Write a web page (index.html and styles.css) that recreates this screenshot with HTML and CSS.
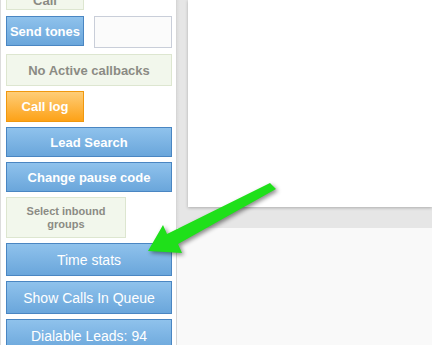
FILE: index.html
```html
<!DOCTYPE html>
<html lang="en">
<head>
  <meta charset="UTF-8">
  <meta name="viewport" content="width=device-width, initial-scale=1.0">
  <title>Agent Panel</title>
  <link rel="stylesheet" href="styles.css">
</head>
<body>
  <div class="page">
    <div class="sidebar">
      <div class="btn pale small-w call">Call</div>
      <div class="row">
        <div class="btn blue bold small-w">Send tones</div>
        <input class="tones" type="text">
      </div>
      <div class="btn pale">No Active callbacks</div>
      <div class="btn orange bold small-w">Call log</div>
      <div class="btn blue bold">Lead Search</div>
      <div class="btn blue bold">Change pause code</div>
      <div class="btn pale two-line">Select inbound<br>groups</div>
      <div class="btn blue tall">Time stats</div>
      <div class="btn blue tall">Show Calls In Queue</div>
      <div class="btn blue tall">Dialable Leads: 94</div>
    </div>
    <div class="main">
      <div class="top">
        <div class="card"></div>
      </div>
      <div class="bottom"></div>
    </div>
  </div>
  <svg class="arrow" width="432" height="345" viewBox="0 0 432 345">
    <polygon points="270,183 276,189 178,244 182,253 148,251 163,225 167,234" fill="#1fe01a"/>
  </svg>
</body>
</html>
```

FILE: styles.css
```css
body{margin:0;font-family:"Liberation Sans",Arial,sans-serif;background:#fff;overflow:hidden;}
.page{display:flex;height:345px;}
.sidebar{width:166px;padding:0 4px 0 5px;border-left:1px solid #dcdcdc;border-right:1px solid #d6d6d6;display:flex;flex-direction:column;gap:5px;margin-top:-20px;background:#fff;}
.row{display:flex;justify-content:space-between;align-items:flex-start;margin-top:1px;margin-bottom:1px;}
.btn{box-sizing:border-box;height:30px;display:flex;align-items:center;justify-content:center;text-align:center;font-size:13px;flex-shrink:0;}
.bold{font-weight:bold;}
.small-w{width:78px;}
.pale.call{align-items:flex-end;padding-bottom:1px;line-height:14px;}
.blue{background:linear-gradient(#8fc2ec,#6aa6db);border:1px solid #4a86c2;color:#fff;}
.blue.tall{height:33px;font-size:14px;}
.orange{background:linear-gradient(#fecd78,#fda217);border:1px solid #f0980e;color:#fff;}
.pale{background:#f2f7ec;border:1px solid #dde6d0;color:#8b8b84;font-weight:bold;}
.pale.two-line{width:120px;height:41px;font-size:11px;line-height:13px;}
.sidebar > .pale:nth-child(3){height:32px;}
.sidebar > .orange{height:31px;}
.tones{box-sizing:border-box;width:78px;height:32px;border:1px solid #c9ced9;background:#fbfbfb;margin:0;padding:0;}
.main{flex:1;display:flex;flex-direction:column;}
.top{height:228px;background:linear-gradient(90deg,#dcdcdc,#e6e6e6 3px);padding-left:11px;box-sizing:border-box;}
.card{height:207px;background:#fff;box-shadow:0 1px 3px rgba(0,0,0,.25);}
.bottom{flex:1;background:#f9f9f9;}
.arrow{position:absolute;left:0;top:0;pointer-events:none;filter:drop-shadow(2px 2px 2px rgba(0,0,0,.45));}
```
